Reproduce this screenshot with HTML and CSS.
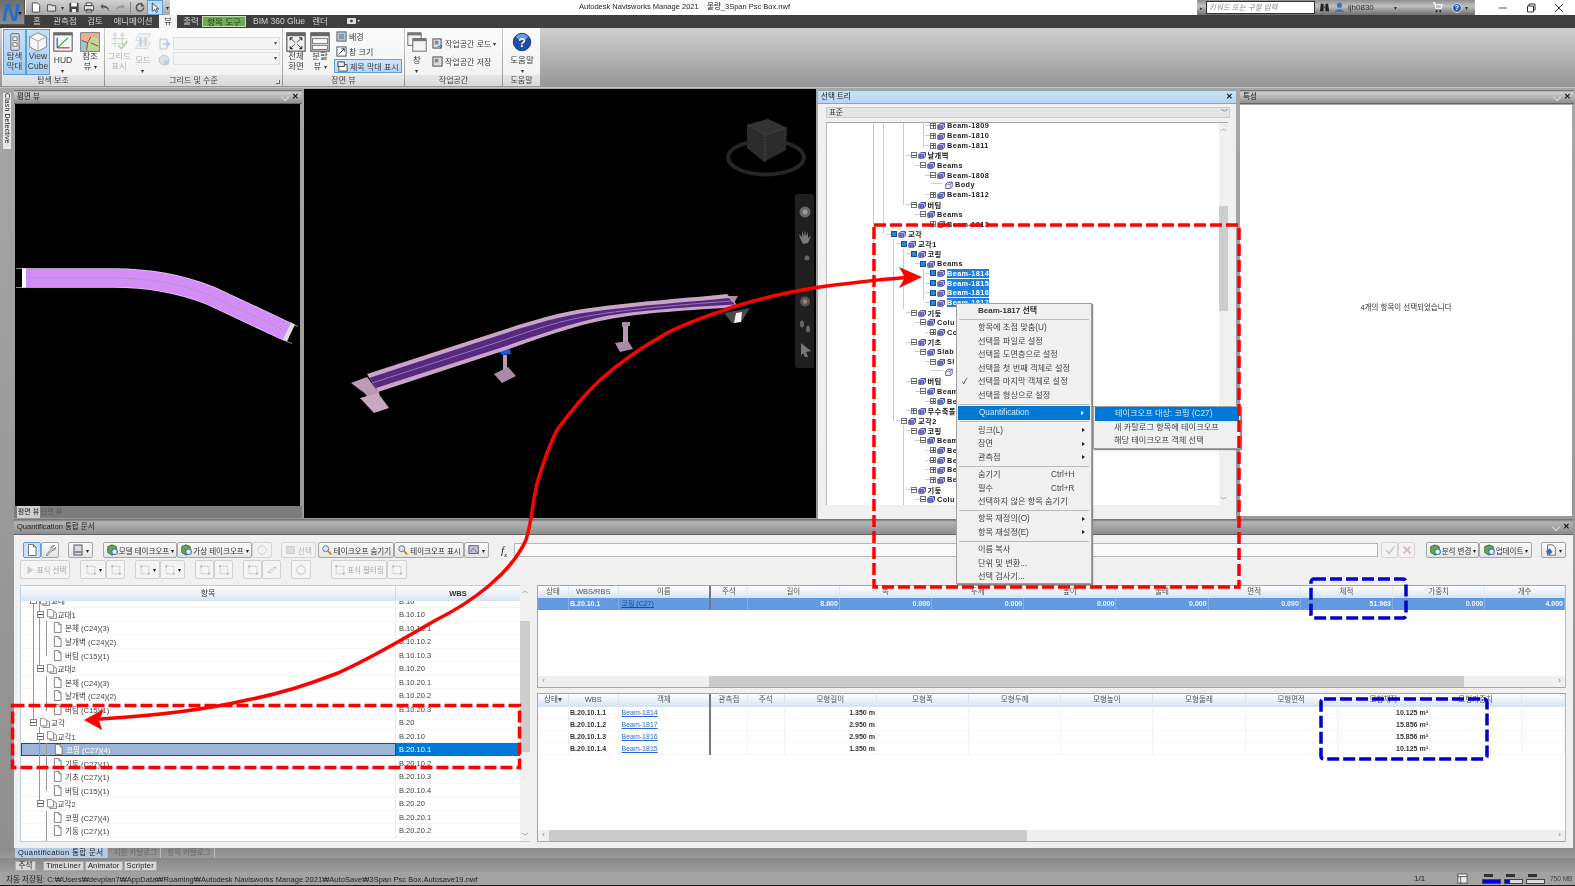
FILE: index.html
```html
<!DOCTYPE html>
<html lang="ko">
<head>
    <meta charset="UTF-8">
    <title>Autodesk Navisworks Manage 2021 - 물량_3Span Psc Box.nwf</title>
    <link rel="stylesheet" href="styles.css">
</head>
<body>
<svg class="defs" width="0" height="0">
    <symbol id="cube" viewBox="0 0 10 10"><path d="M1 4.5 3.5 2H9.500V6.500L7 9H1Z" fill="#c9caf2" stroke="#22228c"/><path d="M1 4.500H7V9M7 4.500 9.500 2M3 4.500V9M5 4.500V9M1 6.500H7" fill="none" stroke="#22228c" stroke-width=".7"/></symbol>
    <symbol id="solid" viewBox="0 0 10 10"><path d="M1 4 3.500 1.500H9V7L6.500 9.500H1Z" fill="#fff" stroke="#33339a"/><path d="M1 4H6.500V9.500M6.500 4 9 1.500" fill="none" stroke="#33339a" stroke-width=".8"/></symbol>
    <symbol id="page" viewBox="0 0 10 12"><path d="M1.500 .5H6.500L9 3V11.500H1.500Z" fill="#fff" stroke="#777"/><path d="M6.500 .5V3H9" fill="none" stroke="#777"/></symbol>
    <symbol id="pages" viewBox="0 0 14 12"><path d="M4.500 2.500H9L12.500 5V11.500H4.500Z" fill="#eee" stroke="#777"/><path d="M1.500 .5H6.500L9 3V9.500H1.500Z" fill="#fff" stroke="#777"/></symbol>
    <symbol id="takeoff" viewBox="0 0 14 14"><path d="M2 3 7 1 12 3V10L7 13 2 10Z" fill="#66a35a" stroke="#3d6b37"/><circle cx="10" cy="9" r="3.200" fill="#fff" stroke="#2f77c5" stroke-width="1.300"/></symbol>
    <symbol id="lens" viewBox="0 0 14 14"><circle cx="5.500" cy="5.500" r="3.500" fill="#d7e7f7" stroke="#667"/><path d="M8 8 12 12" stroke="#c48a1a" stroke-width="2"/></symbol>
    <symbol id="faded" viewBox="0 0 14 14"><path d="M2.500 2.500H11.500V11.500H2.500Z" fill="none" stroke="#bbb" stroke-dasharray="2 1"/><circle cx="2.500" cy="2.500" r="1.200" fill="#bbb"/><circle cx="11.500" cy="11.500" r="1.200" fill="#bbb"/></symbol>
    <symbol id="win" viewBox="0 0 24 24"><rect x="1" y="1" width="22" height="22" fill="#f2f2f2" stroke="#555" stroke-width="1.400"/><rect x="1" y="1" width="22" height="4" fill="#666"/></symbol>
</svg>

<div class="app">
    <div class="appbtn"><b>N</b><i></i></div>

    <header class="titlebar">
        <div class="qat">
            <svg class="qi" viewBox="0 0 12 12"><path d="M2 1H7.500L10 3.500V11H2Z" fill="#fff" stroke="#444"/></svg>
            <svg class="qi" viewBox="0 0 12 12"><path d="M1 3H5L6 4H10V10H1Z" fill="#ddd" stroke="#444"/></svg>
            <span class="qdrop">▾</span>
            <svg class="qi" viewBox="0 0 12 12"><path d="M1 1H11V11H1Z" fill="#444"/><path d="M3 1H9V5H3ZM4 7.500H8V11H4Z" fill="#fff"/></svg>
            <svg class="qi" viewBox="0 0 12 12"><path d="M3 1H9V4H3ZM1 4H11V9H1ZM3 8H9V11H3Z" fill="#eee" stroke="#444"/></svg>
            <svg class="qi" viewBox="0 0 12 12"><path d="M4 2 1 5 4 8V6C7 6 9 7 10 10 11 6 8 4 4 4Z" fill="#555"/></svg>
            <svg class="qi dim" viewBox="0 0 12 12"><path d="M8 2 11 5 8 8V6C5 6 3 7 2 10 1 6 4 4 8 4Z" fill="#888"/></svg>
            <span class="qsep"></span>
            <svg class="qi" viewBox="0 0 12 12"><path d="M10 6A4 4 0 1 1 8 2.500" fill="none" stroke="#555" stroke-width="1.600"/><path d="M7 0V5H11Z" fill="#555"/></svg>
            <span class="qactive"><svg class="qi" viewBox="0 0 12 12"><path d="M3 1V10L5.500 8 7.500 11.500 9 10.500 7 7.500H10Z" fill="#fff" stroke="#345"/></svg></span>
            <span class="qdrop">▾</span>
        </div>
        <div class="doc-title">Autodesk Navisworks Manage 2021 &nbsp;&nbsp; 물량_3Span Psc Box.nwf</div>
        <div class="searchgroup">
            <span class="sg-arrow">▸</span>
            <span class="sg-input">키워드 또는 구절 입력</span>
            <svg class="sg-ico" viewBox="0 0 12 12"><path d="M2 2H5V10H1ZM7 2H10L11 10H7Z" fill="#222"/><path d="M5 4H7V7H5Z" fill="#555"/></svg>
            <svg class="sg-ico" viewBox="0 0 12 12"><circle cx="6" cy="3.500" r="2.800" fill="#3c6fc9"/><path d="M1 11C1 7 11 7 11 11Z" fill="#3c6fc9"/></svg>
            <span class="sg-user">ljh0830</span>
            <span class="sg-caret">▾</span>
            <svg class="sg-ico" viewBox="0 0 12 12"><path d="M1 1H3L4 7H10L11 3H3.500" fill="none" stroke="#fff" stroke-width="1.200"/><circle cx="5" cy="10" r="1.200" fill="#223"/><circle cx="9" cy="10" r="1.200" fill="#223"/></svg>
            <span class="sg-help">?</span>
            <span class="sg-caret">▾</span>
        </div>
        <div class="winbtns">
            <svg viewBox="0 0 10 10"><path d="M1 5H9" stroke="#555"/></svg>
            <svg viewBox="0 0 10 10"><path d="M1.500 3H7.500V9H1.500ZM3 3V1H9V7H7.500" fill="none" stroke="#333"/></svg>
            <svg viewBox="0 0 10 10"><path d="M1 1 9 9M9 1 1 9" stroke="#333"/></svg>
        </div>
    </header>

    <nav class="tabbar">
        <span class="tab t1">홈</span>
        <span class="tab t2">관측점</span>
        <span class="tab t3">검토</span>
        <span class="tab t4">애니메이션</span>
        <span class="tab t5 active">뷰</span>
        <span class="tab t6">출력</span>
        <span class="tab t7 context">항목 도구</span>
        <span class="tab t8">BIM 360 Glue</span>
        <span class="tab t9">렌더</span>
        <span class="tab t10"><svg viewBox="0 0 14 8"><rect x="1" y="1" width="9" height="6" rx="1" fill="#ddd"/><circle cx="5.500" cy="4" r="1.300" fill="#333"/><path d="M11.500 3H14L12.700 5Z" fill="#ddd"/></svg></span>
    </nav>

    <section class="ribbon">
        <div class="rpanel p1">
            <div class="rbody">
                <div class="rb w23 on">
                    <svg class="big" viewBox="0 0 24 24"><rect x="7" y="2" width="10" height="20" rx="1" fill="#ddd" stroke="#555"/><rect x="9.500" y="6" width="5" height="4" fill="#fff" stroke="#666"/><rect x="9.500" y="13" width="5" height="4" fill="#fff" stroke="#666"/></svg>
                    <span>탐색<br>막대</span>
                </div>
                <div class="rb w24 on">
                    <svg class="big" viewBox="0 0 24 24"><path d="M12 1 22 6V18L12 23 2 18V6Z" fill="#f6f6f6" stroke="#777"/><path d="M2 6 12 11 22 6M12 11V23" fill="none" stroke="#999"/></svg>
                    <span>View<br>Cube</span>
                </div>
                <div class="rb w22 gap2">
                    <svg class="big" viewBox="0 0 24 24"><rect x="1" y="1" width="22" height="22" fill="#f4f4f4" stroke="#555" stroke-width="1.200"/><rect x="1" y="1" width="22" height="3" fill="#666"/><path d="M5 19 18 7" stroke="#2daa3c" stroke-width="1.400"/><path d="M5 19V7" stroke="#2c55d0" stroke-width="1.400"/><path d="M5 19H20" stroke="#d02c2c" stroke-width="1.400"/></svg>
                    <span class="push">HUD<br><i class="caret">▾</i></span>
                </div>
                <div class="rb w26 gap3">
                    <svg class="big" viewBox="0 0 24 24"><rect x="1" y="1" width="22" height="22" fill="#eee" stroke="#555" stroke-width="1.200"/><path d="M2 2H22V9L13 6 9 13 2 10Z" fill="#e9b18a"/><path d="M2 10 9 13 8 22H2Z" fill="#8fd0dc"/><path d="M13 6 22 9V22H8L9 13Z" fill="#b9dc90"/><path d="M2 10 9 13 13 6M9 13 8 22M13 13 22 17" fill="none" stroke="#b33" stroke-width="1.200"/></svg>
                    <span>참조<br>뷰 <i class="caret">▾</i></span>
                </div>
            </div>
            <div class="rlabel">탐색 보조</div>
        </div>
        <div class="rpanel p2">
            <div class="rbody off">
                <div class="rb w24 gap1">
                    <svg class="big" viewBox="0 0 24 24"><path d="M7 3V18M16 3V18M3 8H21M3 14H21" stroke="#bbb" fill="none"/><circle cx="7" cy="3" r="2" fill="none" stroke="#bbb"/><circle cx="16" cy="3" r="2" fill="none" stroke="#bbb"/><path d="M11 16 15 20 22 11" stroke="#a6cf9c" fill="none" stroke-width="2.200"/></svg>
                    <span>그리드<br>표시</span>
                </div>
                <div class="rb w24">
                    <svg class="big" viewBox="0 0 24 24"><path d="M7 2H21L17 10H3ZM7 12H21L17 20H3Z" fill="#eee" stroke="#ccc"/><path d="M9 6V17M15 17V6" stroke="#a8c4e0" stroke-width="2"/></svg>
                    <span class="push">모드<br><i class="caret">▾</i></span>
                </div>
                <div class="rsmallic">
                    <svg viewBox="0 0 12 12"><path d="M2 1H9V11H2Z" fill="#f3f3f3" stroke="#bbb"/><path d="M5 6H11M9 3.500 11.500 6 9 8.500" stroke="#9cc0e4" fill="none" stroke-width="1.300"/></svg>
                    <svg viewBox="0 0 12 12"><circle cx="6" cy="6" r="5" fill="#ddd" stroke="#bbb"/><circle cx="8.500" cy="8.500" r="2.500" fill="#a8c4e0"/></svg>
                </div>
                <div class="rcombos">
                    <div class="combo"><i>▾</i></div>
                    <div class="combo"><i>▾</i></div>
                </div>
            </div>
            <div class="rlabel">그리드 및 수준<i class="launcher"></i></div>
        </div>
        <div class="rpanel p3">
            <div class="rbody">
                <div class="rb w24">
                    <svg class="big" viewBox="0 0 24 24"><use href="#win"/><path d="M6 8 11 12.500M18 8 13 12.500M6 19 11 14.500M18 19 13 14.500" stroke="#333"/><path d="M5 7H8M5 7V10M19 7H16M19 7V10M5 20H8M5 20V17M19 20H16M19 20V17" stroke="#222" stroke-width="1.400"/></svg>
                    <span>전체<br>화면</span>
                </div>
                <div class="rb w24">
                    <svg class="big" viewBox="0 0 24 24"><use href="#win"/><rect x="3" y="8" width="18" height="6" fill="#f9f9f9" stroke="#666"/><rect x="3" y="16" width="18" height="5" fill="#f9f9f9" stroke="#666"/></svg>
                    <span>분할<br>뷰 <i class="caret">▾</i></span>
                </div>
                <div class="rrows r3">
                    <div class="rrow"><svg viewBox="0 0 12 12"><rect x="1" y="1" width="10" height="10" fill="#bcd0e4" stroke="#555"/><rect x="3" y="3" width="6" height="6" fill="#8899aa"/></svg>배경</div>
                    <div class="rrow"><svg viewBox="0 0 12 12"><rect x="1" y="1" width="10" height="10" fill="#fff" stroke="#444"/><path d="M3 9 9 3M6 3H9V6" fill="none" stroke="#333"/></svg>창 크기</div>
                    <div class="rrow on"><svg viewBox="0 0 12 12"><rect x="2" y="4" width="9" height="7" fill="#fff" stroke="#444"/><rect x="1" y="1" width="7" height="5" fill="#eee" stroke="#444"/></svg>제목 막대 표시</div>
                </div>
            </div>
            <div class="rlabel">장면 뷰</div>
        </div>
        <div class="rpanel p4">
            <div class="rbody">
                <div class="rb w22">
                    <svg class="big" viewBox="0 0 24 24"><rect x="1" y="1" width="16" height="15" fill="#f4f4f4" stroke="#555"/><rect x="1" y="1" width="16" height="3" fill="#777"/><rect x="7" y="8" width="16" height="15" fill="#f4f4f4" stroke="#555"/><rect x="7" y="8" width="16" height="3" fill="#777"/></svg>
                    <span class="push">창<br><i class="caret">▾</i></span>
                </div>
                <div class="rrows r4">
                    <div class="rrow"><svg viewBox="0 0 12 12"><rect x="1" y="1" width="9" height="10" fill="#ddd" stroke="#444"/><path d="M3 3H7V7H3Z" fill="#888"/><path d="M6 9H11M9 7 11 9 9 11" stroke="#2b6fc8" fill="none"/></svg>작업공간 로드 <i class="caret">▾</i></div>
                    <div class="rrow"><svg viewBox="0 0 12 12"><rect x="1" y="1" width="10" height="10" fill="#ddd" stroke="#444"/><path d="M3 3H7V7H3Z" fill="#888"/></svg>작업공간 저장</div>
                </div>
            </div>
            <div class="rlabel">작업공간</div>
        </div>
        <div class="rpanel p5">
            <div class="rbody">
                <div class="rb w36">
                    <svg class="big" viewBox="0 0 24 24"><circle cx="12" cy="12" r="10.500" fill="#1c4fa8" stroke="#10326e"/><ellipse cx="12" cy="6" rx="7" ry="3.500" fill="#6d9be0"/><text x="12" y="18" text-anchor="middle" class="helpq">?</text></svg>
                    <span class="push">도움말<br><i class="caret">▾</i></span>
                </div>
            </div>
            <div class="rlabel">도움말</div>
        </div>
    </section>

    <main class="workspace">
        <div class="sidestrip"><span>Clash Detective</span></div>

        <section class="panel plan">
            <div class="ptitle">평면 뷰<span class="pbtns"><i class="pin"></i><i class="x">✕</i></span></div>
            <div class="planview">
                <svg viewBox="15 104 285 401">
                    <path d="M16 268H22M16 287H22M291 323 298 326M284 340 292 343" stroke="#888"/>
                    <path class="deck" d="M22 277.500H113C150 277.500 180 283 210 295L288 331.500"/>
                    <path class="deckin" d="M22 277.500H113C150 277.500 180 283 210 295L288 331.500"/>
                    <path class="deckline" d="M25 277.500H113C150 277.500 180 283 210 295L286 330.500"/>
                    <path d="M22 268H26V287H22Z" fill="#fff"/>
                    <path d="M291 322 295 324 287 341 283 339Z" fill="#ddd"/>
                </svg>
            </div>
            <div class="viewtabs"><span class="vt on">평면 뷰</span><span class="vt">단면 뷰</span></div>
        </section>

        <section class="view3d">
            <svg viewBox="304 89 512 429">
                <ellipse cx="766" cy="157.500" rx="38" ry="17" fill="none" stroke="#262626" stroke-width="4"/>
                <path d="M747 125 768 119 787 128 786 150 764 162 747 148Z" fill="#2c2c2c"/>
                <path d="M747 125 768 119 787 128 765 135Z" fill="#333"/>
                <path d="M765 135V162M748 125 765 135 787 128" stroke="#454545" stroke-dasharray="2 1" fill="none"/>

                <path d="M351 383 367 377 379 393 367 395Z" fill="#bd9db6"/>
                <path d="M364 392 379 391 380 400 370 401Z" fill="#b597b0"/>
                <path d="M360 398 378 393 389 408 374 413Z" fill="#c9a8c4"/>
                <path d="M503 355H507V374H503Z" fill="#b79ab2"/>
                <path d="M494 374 508 367 516 376 502 383Z" fill="#a98ba6"/>
                <path d="M499 351 510 349 511 354 502 355Z" fill="#2354d8"/>
                <path d="M623 325H628V342H623Z" fill="#b79ab2"/>
                <path d="M622 322 630 322 630 326 622 327Z" fill="#a98ba6"/>
                <path d="M615 343 628 341 633 349 620 352Z" fill="#a98ba6"/>
                <path d="M728 296 738 296 734 303Z" fill="#a98ba6"/>
                <path d="M724 313 750 308 742 321 732 323Z" fill="#4a4a4a"/>
                <path d="M736 313 742 312 741 322 734 323Z" fill="#f4f0f4"/>

                <path d="M367 374 500 331C530 321 560 312 590 308 640 301 690 298 727 294L739 307C690 310 640 313 610 319 570 326 530 342 500 352L378 392Z" fill="#c8a4c6"/>
                <path d="M369 378 500 335C530 325 560 316 590 312 640 305 690 302 729 298L735 304.500C690 307 640 310 606 316 570 323 530 338 500 348L376 388Z" fill="#55297f"/>
                <path d="M372 383 500 341.500C530 331 560 320 600 314 640 308 690 304 732 301" fill="none" stroke="#b495c4" stroke-width=".7"/>

                <rect x="795" y="194" width="19" height="174" rx="2" fill="#1f1f1f"/>
                <circle cx="805" cy="212" r="5.500" fill="#666"/><circle cx="805" cy="212" r="2.500" fill="#999"/>
                <path d="M800 238 799 234 802 237 802 231 804 236 805 230 806 236 808 232 808 238 811 236 808 243 803 244Z" fill="#777"/>
                <circle cx="807" cy="258" r="2.500" fill="#666"/>
                <circle cx="805" cy="301.500" r="5" fill="#555"/><circle cx="805" cy="301.500" r="2.200" fill="#8a8a6a"/>
                <ellipse cx="802" cy="324" rx="2" ry="3.500" fill="#666"/><ellipse cx="808" cy="329" rx="2" ry="3.500" fill="#666"/>
                <path d="M801 343 811 351 806 352 808 357 805 357 803 353 801 356Z" fill="#777"/>
            </svg>
        </section>

        <section class="panel seltree">
            <div class="ptitle focus">선택 트리<span class="pbtns"><i class="x">✕</i></span></div>
            <div class="treewrap">
                <div class="treecombo">표준<i>﹀</i></div>
                <div class="treebox">
                    <i class="g g1"></i><i class="g g2"></i><i class="g g3"></i><i class="g g4"></i><i class="g g5"></i><i class="g g6"></i><i class="g g7"></i><i class="g g8"></i>
                    <div class="treerows">
                        <div class="tr l4"><i class="xb plus"></i><svg class="ic"><use href="#cube"/></svg>Beam-1809</div>
                        <div class="tr l4"><i class="xb plus"></i><svg class="ic"><use href="#cube"/></svg>Beam-1810</div>
                        <div class="tr l4"><i class="xb plus"></i><svg class="ic"><use href="#cube"/></svg>Beam-1811</div>
                        <div class="tr l2"><i class="xb"></i><svg class="ic"><use href="#cube"/></svg>날개벽</div>
                        <div class="tr l3"><i class="xb"></i><svg class="ic"><use href="#cube"/></svg>Beams</div>
                        <div class="tr l4"><i class="xb"></i><svg class="ic"><use href="#cube"/></svg>Beam-1808</div>
                        <div class="tr l5"><i class="xb none"></i><svg class="ic"><use href="#solid"/></svg>Body</div>
                        <div class="tr l4"><i class="xb plus"></i><svg class="ic"><use href="#cube"/></svg>Beam-1812</div>
                        <div class="tr l2"><i class="xb"></i><svg class="ic"><use href="#cube"/></svg>버팀</div>
                        <div class="tr l3"><i class="xb"></i><svg class="ic"><use href="#cube"/></svg>Beams</div>
                        <div class="tr l4"><i class="xb plus"></i><svg class="ic"><use href="#cube"/></svg>Beam-1813</div>
                        <div class="tr l0 sel"><i class="xb"></i><svg class="ic"><use href="#cube"/></svg>교각</div>
                        <div class="tr l1 sel"><i class="xb"></i><svg class="ic"><use href="#cube"/></svg>교각1</div>
                        <div class="tr l2 sel"><i class="xb"></i><svg class="ic"><use href="#cube"/></svg>코핑</div>
                        <div class="tr l3 sel"><i class="xb"></i><svg class="ic"><use href="#cube"/></svg>Beams</div>
                        <div class="tr l4 sel hl"><i class="xb"></i><svg class="ic"><use href="#cube"/></svg><span>Beam-1814</span></div>
                        <div class="tr l4 sel hl"><i class="xb"></i><svg class="ic"><use href="#cube"/></svg><span>Beam-1815</span></div>
                        <div class="tr l4 sel hl"><i class="xb"></i><svg class="ic"><use href="#cube"/></svg><span>Beam-1816</span></div>
                        <div class="tr l4 sel hl"><i class="xb"></i><svg class="ic"><use href="#cube"/></svg><span>Beam-1817</span></div>
                        <div class="tr l2"><i class="xb"></i><svg class="ic"><use href="#cube"/></svg>기둥</div>
                        <div class="tr l3"><i class="xb"></i><svg class="ic"><use href="#cube"/></svg>Colu</div>
                        <div class="tr l4"><i class="xb plus"></i><svg class="ic"><use href="#cube"/></svg>Co</div>
                        <div class="tr l2"><i class="xb"></i><svg class="ic"><use href="#cube"/></svg>기초</div>
                        <div class="tr l3"><i class="xb"></i><svg class="ic"><use href="#cube"/></svg>Slab</div>
                        <div class="tr l4"><i class="xb"></i><svg class="ic"><use href="#cube"/></svg>Sl</div>
                        <div class="tr l5"><i class="xb none"></i><svg class="ic"><use href="#solid"/></svg></div>
                        <div class="tr l2"><i class="xb"></i><svg class="ic"><use href="#cube"/></svg>버팀</div>
                        <div class="tr l3"><i class="xb"></i><svg class="ic"><use href="#cube"/></svg>Beam</div>
                        <div class="tr l4"><i class="xb plus"></i><svg class="ic"><use href="#cube"/></svg>Be</div>
                        <div class="tr l2"><i class="xb plus"></i><svg class="ic"><use href="#cube"/></svg>무수축몰</div>
                        <div class="tr l1"><i class="xb"></i><svg class="ic"><use href="#cube"/></svg>교각2</div>
                        <div class="tr l2"><i class="xb"></i><svg class="ic"><use href="#cube"/></svg>코핑</div>
                        <div class="tr l3"><i class="xb"></i><svg class="ic"><use href="#cube"/></svg>Beam</div>
                        <div class="tr l4"><i class="xb plus"></i><svg class="ic"><use href="#cube"/></svg>Be</div>
                        <div class="tr l4"><i class="xb plus"></i><svg class="ic"><use href="#cube"/></svg>Be</div>
                        <div class="tr l4"><i class="xb plus"></i><svg class="ic"><use href="#cube"/></svg>Be</div>
                        <div class="tr l4"><i class="xb plus"></i><svg class="ic"><use href="#cube"/></svg>Be</div>
                        <div class="tr l2"><i class="xb"></i><svg class="ic"><use href="#cube"/></svg>기둥</div>
                        <div class="tr l3"><i class="xb"></i><svg class="ic"><use href="#cube"/></svg>Colu</div>
                    </div>
                    <div class="vscroll tscroll"><b>︿</b><i class="thumb"></i><b class="end">﹀</b></div>
                </div>
            </div>
        </section>

        <section class="panel props">
            <div class="ptitle">특성<span class="pbtns"><i class="pin"></i><i class="x">✕</i></span></div>
            <div class="propbody">4개의 항목이 선택되었습니다</div>
        </section>
    </main>

    <section class="quant">
        <div class="ptitle qtitle">Quantification 통합 문서<span class="pbtns"><i class="pin"></i><i class="x">✕</i></span></div>
        <div class="qbody">
            <div class="toolbar tb1">
                <div class="bgroup m0">
                    <span class="tbtn icon on"><svg viewBox="0 0 12 12"><use href="#page"/></svg></span>
                    <span class="tbtn icon"><svg viewBox="0 0 12 12"><path d="M2 11 7 5.500C6.500 3 8 1 10.500 1.500L8.500 3.500 9 4.500 10 5 12 3C12 5.500 10 7 8 6.500L3 12Z" fill="#ddd" stroke="#666" stroke-width=".7"/></svg></span>
                </div>
                <div class="bgroup m9"><span class="tbtn icon wide"><svg viewBox="0 0 12 12"><rect x="2" y="1" width="8" height="10" fill="#ddd" stroke="#556"/><rect x="2" y="7" width="8" height="2" fill="#889"/></svg><i>▾</i></span></div>
                <div class="bgroup m10">
                    <span class="tbtn b74"><svg viewBox="0 0 14 14"><use href="#takeoff"/></svg>모델 테이크오프<i>▾</i></span>
                    <span class="tbtn b75"><svg viewBox="0 0 14 14"><use href="#takeoff"/></svg>가상 테이크오프<i>▾</i></span>
                    <span class="tbtn b20 off"><svg viewBox="0 0 14 14"><circle cx="7" cy="7" r="5" fill="none" stroke="#ccc"/></svg></span>
                </div>
                <div class="bgroup m9"><span class="tbtn b35 off"><svg viewBox="0 0 14 14"><rect x="2" y="3" width="9" height="8" fill="#ddd" stroke="#ccc"/></svg>선택</span></div>
                <div class="bgroup m2">
                    <span class="tbtn b76"><svg viewBox="0 0 14 14"><use href="#lens"/></svg>테이크오프 숨기기</span>
                    <span class="tbtn b70"><svg viewBox="0 0 14 14"><use href="#lens"/></svg>테이크오프 표시</span>
                    <span class="tbtn b25"><svg viewBox="0 0 14 14"><rect x="1" y="2" width="11" height="9" fill="#b8c4d8" stroke="#556"/><path d="M3 9 6 5 9 8 12 12" stroke="#c44" fill="none"/></svg><i>▾</i></span>
                </div>
                <span class="fx">f<sub>x</sub></span>
                <div class="formula"></div>
                <div class="bgroup m3">
                    <span class="tbtn b17 off ctr"><svg viewBox="0 0 14 14"><path d="M2 7 6 11 12 3" fill="none" stroke="#ccc" stroke-width="2"/></svg></span>
                    <span class="tbtn b17 off ctr"><svg viewBox="0 0 14 14"><path d="M3 3 11 11M11 3 3 11" fill="none" stroke="#dbb" stroke-width="2"/></svg></span>
                </div>
                <div class="bgroup m11">
                    <span class="tbtn b53"><svg viewBox="0 0 14 14"><use href="#takeoff"/></svg>분석 변경<i>▾</i></span>
                    <span class="tbtn b53"><svg viewBox="0 0 14 14"><use href="#takeoff"/></svg>업데이트<i>▾</i></span>
                </div>
                <div class="bgroup m9"><span class="tbtn b25"><svg viewBox="0 0 14 14"><path d="M3 1H9L12 4V13H3Z" fill="#fff" stroke="#556"/><path d="M1 9 5 5 9 9 5 13Z" fill="#2b6fc8"/></svg><i>▾</i></span></div>
            </div>
            <div class="toolbar tb2 dimmed">
                <div class="bgroup m0"><span class="tbtn b50"><svg viewBox="0 0 14 14"><path d="M4 2V12L11 7Z" fill="#ccc"/></svg>표식 선택</span></div>
                <div class="bgroup m10"><span class="tbtn b26"><svg viewBox="0 0 14 14"><use href="#faded"/></svg><i>▾</i></span><span class="tbtn b19"><svg viewBox="0 0 14 14"><use href="#faded"/></svg></span></div>
                <div class="bgroup m10"><span class="tbtn b25"><svg viewBox="0 0 14 14"><use href="#faded"/></svg><i>▾</i></span><span class="tbtn b25"><svg viewBox="0 0 14 14"><use href="#faded"/></svg><i>▾</i></span></div>
                <div class="bgroup m10"><span class="tbtn b19"><svg viewBox="0 0 14 14"><use href="#faded"/></svg></span><span class="tbtn b19"><svg viewBox="0 0 14 14"><use href="#faded"/></svg></span></div>
                <div class="bgroup m10"><span class="tbtn b19"><svg viewBox="0 0 14 14"><use href="#faded"/></svg></span><span class="tbtn b19"><svg viewBox="0 0 14 14"><path d="M2 10 9 4H12L6 10Z" fill="none" stroke="#bbb"/></svg></span></div>
                <div class="bgroup m10"><span class="tbtn b20"><svg viewBox="0 0 14 14"><circle cx="7" cy="7" r="5" fill="none" stroke="#bbb"/></svg></span></div>
                <div class="bgroup m20"><span class="tbtn b56"><svg viewBox="0 0 14 14"><use href="#faded"/></svg>표식 필터링</span><span class="tbtn b20"><svg viewBox="0 0 14 14"><use href="#faded"/></svg></span></div>
            </div>

            <div class="qgrid">
                <div class="qtree">
                    <div class="qhead"><span class="qh1">항목</span><span class="qh2">WBS</span></div>
                    <div class="qlist">
                        <i class="qg q1"></i><i class="qg q2"></i><i class="qg q3"></i><i class="qg q4"></i><i class="qg q5"></i><i class="qg q6"></i><i class="qg q7"></i>
                        <div class="qrows">
                            <div class="qr"><div class="qn d0"><i class="xb"></i><svg class="qi2"><use href="#pages"/></svg>교대</div><div class="qw">B.10</div></div>
                            <div class="qr"><div class="qn d1"><i class="xb"></i><svg class="qi2"><use href="#pages"/></svg>교대1</div><div class="qw">B.10.10</div></div>
                            <div class="qr"><div class="qn d2"><svg class="qi3"><use href="#page"/></svg>본체 (C24)(3)</div><div class="qw">B.10.10.1</div></div>
                            <div class="qr"><div class="qn d2"><svg class="qi3"><use href="#page"/></svg>날개벽 (C24)(2)</div><div class="qw">B.10.10.2</div></div>
                            <div class="qr"><div class="qn d2"><svg class="qi3"><use href="#page"/></svg>버팀 (C15)(1)</div><div class="qw">B.10.10.3</div></div>
                            <div class="qr"><div class="qn d1"><i class="xb"></i><svg class="qi2"><use href="#pages"/></svg>교대2</div><div class="qw">B.10.20</div></div>
                            <div class="qr"><div class="qn d2"><svg class="qi3"><use href="#page"/></svg>본체 (C24)(3)</div><div class="qw">B.10.20.1</div></div>
                            <div class="qr"><div class="qn d2"><svg class="qi3"><use href="#page"/></svg>날개벽 (C24)(2)</div><div class="qw">B.10.20.2</div></div>
                            <div class="qr"><div class="qn d2"><svg class="qi3"><use href="#page"/></svg>버팀 (C15)(1)</div><div class="qw">B.10.20.3</div></div>
                            <div class="qr"><div class="qn d0"><i class="xb"></i><svg class="qi2"><use href="#pages"/></svg>교각</div><div class="qw">B.20</div></div>
                            <div class="qr"><div class="qn d1"><i class="xb"></i><svg class="qi2"><use href="#pages"/></svg>교각1</div><div class="qw">B.20.10</div></div>
                            <div class="qr picked"><div class="qn d2"><svg class="qi3"><use href="#page"/></svg>코핑 (C27)(4)</div><div class="qw">B.20.10.1</div></div>
                            <div class="qr"><div class="qn d2"><svg class="qi3"><use href="#page"/></svg>기둥 (C27)(1)</div><div class="qw">B.20.10.2</div></div>
                            <div class="qr"><div class="qn d2"><svg class="qi3"><use href="#page"/></svg>기초 (C27)(1)</div><div class="qw">B.20.10.3</div></div>
                            <div class="qr"><div class="qn d2"><svg class="qi3"><use href="#page"/></svg>버팀 (C15)(1)</div><div class="qw">B.20.10.4</div></div>
                            <div class="qr"><div class="qn d1"><i class="xb"></i><svg class="qi2"><use href="#pages"/></svg>교각2</div><div class="qw">B.20.20</div></div>
                            <div class="qr"><div class="qn d2"><svg class="qi3"><use href="#page"/></svg>코핑 (C27)(4)</div><div class="qw">B.20.20.1</div></div>
                            <div class="qr"><div class="qn d2"><svg class="qi3"><use href="#page"/></svg>기둥 (C27)(1)</div><div class="qw">B.20.20.2</div></div>
                        </div>
                    </div>
                    <div class="vscroll qscroll"><b>︿</b><i class="thumb"></i><b class="end">﹀</b></div>
                </div>

                <div class="qright">
                    <div class="grid upper">
                        <table>
                            <colgroup><col class="c30"><col class="c50"><col class="c92 split"><col class="c37"><col class="c92"><col class="c92"><col class="c92"><col class="c92"><col class="c92"><col class="c92"><col class="c92"><col class="c92"><col></colgroup>
                            <thead><tr><th>상태</th><th>WBS/RBS</th><th class="div">이름</th><th>주석</th><th>길이</th><th>폭</th><th>두께</th><th>높이</th><th>둘레</th><th>면적</th><th>체적</th><th>가중치</th><th>개수</th></tr></thead>
                            <tbody><tr class="rowsel"><td></td><td>B.20.10.1</td><td class="div"><a>코핑 (C27)</a></td><td></td><td class="n">8.600</td><td class="n">0.000</td><td class="n">0.000</td><td class="n">0.000</td><td class="n">0.000</td><td class="n">0.000</td><td class="n">51.963</td><td class="n">0.000</td><td class="n">4.000</td></tr></tbody>
                        </table>
                        <div class="hscroll h1"><b>‹</b><i class="hthumb"></i><b class="end">›</b></div>
                    </div>
                    <div class="grid lower">
                        <table>
                            <colgroup><col class="c30"><col class="c50"><col class="c92"><col class="c37"><col class="c37"><col class="c92"><col class="c92"><col class="c92"><col class="c92"><col class="c92"><col class="c92"><col class="c92"><col class="c92"><col></colgroup>
                            <thead><tr><th>상태▾</th><th>WBS</th><th class="div">객체</th><th>관측점</th><th>주석</th><th>모형길이</th><th>모형폭</th><th>모형두께</th><th>모형높이</th><th>모형둘레</th><th>모형면적</th><th>모형체적</th><th>모형가중치</th><th></th></tr></thead>
                            <tbody>
                                <tr><td></td><td>B.20.10.1.1</td><td class="div"><a>Beam-1814</a></td><td></td><td></td><td class="n">1.350 m</td><td></td><td></td><td></td><td></td><td></td><td class="n">10.125 m³</td><td></td><td></td></tr>
                                <tr><td></td><td>B.20.10.1.2</td><td class="div"><a>Beam-1817</a></td><td></td><td></td><td class="n">2.950 m</td><td></td><td></td><td></td><td></td><td></td><td class="n">15.856 m³</td><td></td><td></td></tr>
                                <tr><td></td><td>B.20.10.1.3</td><td class="div"><a>Beam-1816</a></td><td></td><td></td><td class="n">2.950 m</td><td></td><td></td><td></td><td></td><td></td><td class="n">15.856 m³</td><td></td><td></td></tr>
                                <tr><td></td><td>B.20.10.1.4</td><td class="div"><a>Beam-1815</a></td><td></td><td></td><td class="n">1.350 m</td><td></td><td></td><td></td><td></td><td></td><td class="n">10.125 m³</td><td></td><td></td></tr>
                            </tbody>
                        </table>
                        <div class="hscroll h2"><b>‹</b><i class="hthumb"></i><b class="end">›</b></div>
                    </div>
                </div>
            </div>
        </div>
    </section>

    <div class="doctabs"><span class="dt on">Quantification 통합 문서</span><span class="dt">지원 카탈로그</span><span class="dt">항목 카탈로그</span></div>
    <div class="dockbar"><span class="db first">주석</span><span class="db">TimeLiner</span><span class="db">Animator</span><span class="db">Scripter</span></div>
    <footer class="statusbar">
        <span class="autosave">자동 저장됨: C:₩Users₩devplan7₩AppData₩Roaming₩Autodesk Navisworks Manage 2021₩AutoSave₩3Span Psc Box.Autosave19.nwf</span>
        <span class="sheet">1/1</span>
        <svg class="sheetic" viewBox="0 0 12 12"><rect x="1" y="1" width="10" height="10" fill="#eee" stroke="#555"/><path d="M1 4H11M4 4V11" stroke="#555"/></svg>
        <span class="meter"><i class="m100"></i></span>
        <span class="meter"><i class="m30"></i></span>
        <span class="meter"></span>
        <span class="mem">750 MB</span>
    </footer>

    <div class="ctxmenu">
        <div class="mi head">Beam-1817 선택</div>
        <div class="msep"></div>
        <div class="mi">항목에 초점 맞춤(U)</div>
        <div class="mi">선택을 파일로 설정</div>
        <div class="mi">선택을 도면층으로 설정</div>
        <div class="mi">선택을 첫 번째 객체로 설정</div>
        <div class="mi check">선택을 마지막 객체로 설정</div>
        <div class="mi">선택을 형상으로 설정</div>
        <div class="msep"></div>
        <div class="mi hot sub">Quantification</div>
        <div class="msep"></div>
        <div class="mi sub">링크(L)</div>
        <div class="mi sub">장면</div>
        <div class="mi sub">관측점</div>
        <div class="msep"></div>
        <div class="mi">숨기기<kbd>Ctrl+H</kbd></div>
        <div class="mi">필수<kbd>Ctrl+R</kbd></div>
        <div class="mi">선택하지 않은 항목 숨기기</div>
        <div class="msep"></div>
        <div class="mi sub">항목 재정의(O)</div>
        <div class="mi sub">항목 재설정(E)</div>
        <div class="msep"></div>
        <div class="mi">이름 복사</div>
        <div class="mi">단위 및 변환...</div>
        <div class="mi">선택 검사기...</div>
    </div>
    <div class="ctxmenu submenu">
        <div class="mi hot">테이크오프 대상: 코핑 (C27)</div>
        <div class="mi">새 카탈로그 항목에 테이크오프</div>
        <div class="mi">해당 테이크오프 객체 선택</div>
    </div>

    <svg class="marks" viewBox="0 0 1575 886">
        <rect class="dash-red" x="874" y="225" width="365" height="362"/>
        <rect class="dash-red" x="12.500" y="705.500" width="507" height="62"/>
        <rect class="dash-blue" x="1311" y="579" width="95" height="39" rx="3"/>
        <rect class="dash-blue" x="1321" y="699" width="166" height="60" rx="3"/>
        <path class="curve" d="M908 277.500C880 279 850 283 820 287 788 292 758 299 733 307 710 315 688 322 667 333 642 347 620 362 600 380 584 395 570 412 557 430 549 445 543 464 538 480 532 500 533 518 526 540 510 575 470 603 436 620 405 638 372 658 338 673 310 684 280 694 247 700 200 711 150 716 100 719"/>
        <path class="head" d="M922 277 899 267 905 277.500 899 288Z"/>
        <path class="head" d="M84 720 104 709 99 720 102 730Z"/>
    </svg>
</div>
</body>
</html>
```
FILE: styles.css
```css
* {
    margin: 0;
    padding: 0;
    box-sizing: border-box;
}

body {
    font-family: "Liberation Sans", "Noto Sans CJK KR", sans-serif;
    font-size: 8px;
    color: #3a3a3a;
    background: #000;
}

i { font-style: normal; }

.defs { position: absolute; }

.app {
    position: relative;
    width: 1575px;
    height: 886px;
    overflow: hidden;
    display: flex;
    flex-direction: column;
    background: linear-gradient(#a9a9a9, #8e8e8e);
    filter: blur(0.3px);
}

/* title bar */
.appbtn {
    position: absolute;
    left: 0;
    top: 0;
    width: 25px;
    height: 25px;
    background: linear-gradient(#6e6e6e, #8c8c8c);
    border-right: 1px solid #555;
    border-bottom: 1px solid #555;
    z-index: 3;
}
.appbtn b {
    display: block;
    font-size: 24px;
    line-height: 25px;
    padding-left: 2px;
    color: #1f6fd0;
    font-style: italic;
}
.appbtn i {
    position: absolute;
    right: 2px;
    top: 12px;
    border: 2px solid transparent;
    border-top: 3px solid #222;
}

.titlebar {
    height: 15px;
    background: #fff;
    display: flex;
    align-items: stretch;
    position: relative;
}
.qat {
    width: 144px;
    margin-left: 26px;
    display: flex;
    align-items: center;
    padding-left: 4px;
    background: linear-gradient(#d2d2d2, #a8a8a8);
    gap: 3.5px;
}
.qi { width: 12px; height: 11px; flex: none; }
.qi.dim { opacity: .7; }
.qdrop { font-size: 6px; color: #333; }
.qsep { width: 1px; height: 12px; background: #888; }
.qactive {
    display: flex;
    background: #bcdcf8;
    border: 1px solid #5f9fdc;
    padding: 1px;
    height: 15px;
    align-items: center;
    margin-left: -3px;
}
.doc-title {
    margin-left: 409px;
    width: 620px;
    line-height: 14px;
    font-size: 7.500px;
    color: #222;
}
.searchgroup {
    position: absolute;
    left: 1197px;
    top: 0;
    width: 278px;
    height: 15px;
    display: flex;
    align-items: center;
    background: linear-gradient(#8d8d8d, #c0c0c0 40%, #6e6e6e);
}
.sg-arrow { font-size: 5px; padding: 0 3px; color: #333; }
.sg-input {
    width: 109px;
    height: 13px;
    background: #fff;
    border: 1px solid #333;
    font-style: italic;
    font-size: 7.500px;
    color: #888;
    padding-left: 2px;
    line-height: 11px;
}
.sg-ico { width: 11px; height: 11px; margin-left: 4px; flex: none; }
.sg-user { font-size: 8px; margin-left: 3px; width: 46px; color: #333; }
.sg-caret { font-size: 6px; color: #333; width: 34px; }
.sg-help {
    width: 10px;
    height: 10px;
    border-radius: 50%;
    background: #2f62b8;
    color: #fff;
    border: 1px solid #ddd;
    font: bold 7px/8px "Liberation Sans", sans-serif;
    text-align: center;
    margin-left: 9px;
    margin-right: 3px;
}
.searchgroup .sg-caret:last-child { width: 8px; }
.winbtns {
    position: absolute;
    left: 1498px;
    top: 0;
    display: flex;
    gap: 18px;
    padding-top: 3px;
}
.winbtns svg { width: 10px; height: 10px; }

/* ribbon */
.tabbar {
    height: 13px;
    background: #3f3f3f;
    display: flex;
    padding-left: 30px;
    align-items: stretch;
}
.tab {
    color: #cfcfcf;
    font-size: 8.500px;
    line-height: 13px;
    text-align: center;
    flex: none;
}
.tab svg { width: 14px; height: 8px; margin-top: 2px; }
.tab.active { background: #f3f3f3; color: #333; }
.tab.context {
    background: #6cab59;
    border: 1px solid #bfe0ad;
    color: #1e3a18;
    line-height: 10px;
    margin: 1px 0;
}
.t1 { width: 14px; }
.t2 { width: 30px; margin-left: 6px; }
.t3 { width: 20px; margin-left: 5px; }
.t4 { width: 42px; margin-left: 7px; }
.t5 { width: 18px; margin-left: 5px; }
.t6 { width: 22px; margin-left: 3px; }
.t7 { width: 44px; margin-left: 3px; }
.t8 { width: 52px; margin-left: 7px; }
.t9 { width: 18px; margin-left: 6px; }
.t10 { width: 18px; margin-left: 15px; }

.ribbon {
    height: 60px;
    display: flex;
    padding: 0 0 1px 2px;
    gap: 1px;
    background: linear-gradient(#cfcfcf, #959595);
    border-bottom: 1px solid #c4c4c4;
}
.rpanel {
    display: flex;
    flex-direction: column;
    background: linear-gradient(#fbfbfb, #f1f1f1);
}
.p1 { width: 102px; }
.p2 { width: 177px; }
.p3 { width: 121px; }
.p4 { width: 97px; }
.p5 { width: 37px; }
.rbody { flex: 1; min-height: 0; display: flex; padding: 1px 1px 0; }
.rlabel {
    position: relative;
    height: 11px;
    flex: none;
    background: linear-gradient(#e6e6e6, #d8d8d8);
    font-size: 8px;
    line-height: 11px;
    text-align: center;
    color: #444;
}
.launcher {
    position: absolute;
    right: 2px;
    bottom: 2px;
    width: 4px;
    height: 4px;
    border-right: 1px solid #666;
    border-bottom: 1px solid #666;
}
.rb {
    display: flex;
    flex-direction: column;
    align-items: center;
    flex: none;
    padding-top: 3px;
    font-size: 8.500px;
    line-height: 9.500px;
    text-align: center;
    color: #3c3c3c;
}
.rb .big { width: 20px; height: 20px; flex: none; }
.rb .push { margin-top: 4px; }
.rb.on { background: linear-gradient(#c5e0fa, #a5cdf4); border: 1px solid #5a9fe0; padding-top: 2px; }
.gap1 { margin-left: 1px; }
.gap2 { margin-left: 2px; }
.gap3 { margin-left: 3px; }
.w22 { width: 22px; }
.w23 { width: 23px; }
.w24 { width: 24px; }
.w26 { width: 26px; }
.w36 { width: 36px; }
.caret { font-size: 6px; color: #333; line-height: 6px; }
.rbody.off .rb { color: #b5b5b5; }
.rbody.off svg { opacity: .8; }
.rsmallic { display: flex; flex-direction: column; gap: 4px; margin: 9px 0 0 3px; width: 15px; }
.rsmallic svg { width: 12px; height: 12px; }
.rcombos { display: flex; flex-direction: column; gap: 2px; margin-top: 8px; }
.combo {
    width: 107px;
    height: 13px;
    background: #f5f5f5;
    border: 1px solid #e0e0e0;
    position: relative;
}
.combo i { position: absolute; right: 2px; top: 1px; font-size: 6px; color: #555; }
.rrows { display: flex; flex-direction: column; }
.rrow {
    display: flex;
    align-items: center;
    gap: 2px;
    font-size: 8px;
    height: 15px;
    padding-left: 2px;
    white-space: nowrap;
}
.rrow svg { width: 11px; height: 11px; flex: none; }
.rrow.on { background: linear-gradient(#d0e6fb, #b5d6f6); border: 1px solid #5a9fe0; height: 14px; }
.r3 { width: 68px; margin-left: 2px; }
.r4 { margin-left: 2px; padding-top: 7px; gap: 3px; }

/* docked panels */
.workspace {
    height: 431px;
    display: flex;
    padding-top: 2px;
}
.sidestrip {
    width: 14px;
    padding: 3px 0 0 3px;
}
.sidestrip span {
    display: block;
    width: 8px;
    height: 56px;
    background: #e6e6e6;
    writing-mode: vertical-rl;
    font-size: 7px;
    line-height: 8px;
    white-space: nowrap;
    letter-spacing: .1px;
    color: #222;
}
.panel { display: flex; flex-direction: column; }
.ptitle {
    height: 14px;
    flex: none;
    background: linear-gradient(#a9a9a9, #cdcdcd 15%, #8f8f8f);
    border-top: 1px solid #777;
    border-bottom: 1px solid #666;
    font-size: 7.500px;
    line-height: 12px;
    padding-left: 3px;
    position: relative;
    color: #222;
}
.ptitle.focus {
    background: linear-gradient(#c9e0f5, #b7d6f3);
    border-color: #8aa;
}
.pbtns { position: absolute; right: 3px; top: 0; display: flex; gap: 4px; align-items: center; }
.pin { width: 6px; height: 6px; border-right: 1px solid #ddd; border-bottom: 1px solid #ddd; transform: rotate(45deg); }
.x { font-size: 8px; color: #111; font-weight: bold; }

.plan { width: 288px; }
.planview {
    flex: 1;
    background: #000;
    margin: 0 2px 0 1px;
}
.planview svg, .view3d svg { display: block; width: 100%; height: 100%; }
.deck { fill: none; stroke: #e6d2f2; stroke-width: 19.500; }
.deckin { fill: none; stroke: #d48cfb; stroke-width: 18; }
.deckline { fill: none; stroke: #a0a0a0; stroke-width: .8; }
.viewtabs {
    height: 12px;
    flex: none;
    background: #7c7c7c;
    display: flex;
    padding-left: 3px;
    margin-bottom: 1px;
}
.vt { width: 23px; font-size: 7px; line-height: 11px; text-align: center; color: #555; }
.vt.on { background: #d0d0d0; color: #222; }

.view3d {
    width: 512px;
    margin: -1px 2px 1px;
    background: #000;
}

.seltree { width: 418px; }
.treewrap {
    flex: 1;
    background: #f0f0f0;
    padding: 3px 6px 14px 8px;
    display: flex;
    flex-direction: column;
    min-height: 0;
}
.treecombo {
    height: 11px;
    flex: none;
    background: #e4e4e4;
    border: 1px solid #ccc;
    font-size: 7.500px;
    line-height: 9px;
    padding-left: 2px;
    position: relative;
}
.treecombo i { position: absolute; right: 1px; top: 0; font-size: 7px; color: #555; }
.treebox {
    position: relative;
    margin: 4px 2px 0 0;
    flex: 1;
    background: #fff;
    overflow: hidden;
    border-top: 1px solid #aaa;
    border-left: 1px solid #bbb;
}
.treerows { margin-top: -2px; }
.tr {
    height: 9.830px;
    display: flex;
    align-items: center;
    font-weight: bold;
    font-size: 7.300px;
    letter-spacing: .4px;
    color: #222;
    white-space: nowrap;
    position: relative;
}
.l0 { padding-left: 64px; }
.l1 { padding-left: 74px; }
.l2 { padding-left: 83.500px; }
.l3 { padding-left: 93px; }
.l4 { padding-left: 103px; }
.l5 { padding-left: 106px; }
.xb {
    width: 6px;
    height: 6px;
    flex: none;
    border: 1px solid #777;
    background: #fff;
    position: relative;
    margin-right: 1px;
}
.xb::after {
    content: "";
    position: absolute;
    left: 0;
    right: 0;
    top: 1.500px;
    height: 1px;
    background: #555;
}
.xb::before {
    content: "";
    position: absolute;
    left: -6px;
    width: 5px;
    top: 1.500px;
    height: 1px;
    background: #ccc;
}
.xb.plus { background: linear-gradient(#555, #555) center/1px 100% no-repeat #fff; }
.xb.none { border: 0; background: none; width: 11px; }
.xb.none::after { display: none; }
.xb.none::before { left: -2px; width: 11px; }
.sel .xb { border-color: #0b4fa0; background: #2f86dd; }
.sel .xb::after { display: none; }
.ic { width: 8px; height: 8px; margin-right: 2px; flex: none; }
.hl span { background: #1f80dc; color: #fff; }
.g { position: absolute; width: 1px; background: #ccc; }
.g1 { left: 46px; top: 0; height: 384px; }
.g2 { left: 56px; top: 0; height: 111px; }
.g3 { left: 76px; top: 0; height: 82px; }
.g4 { left: 96px; top: 0; height: 24px; }
.g5 { left: 66px; top: 116px; height: 182px; }
.g6 { left: 76px; top: 126px; height: 60px; }
.g7 { left: 76px; top: 302px; height: 82px; }
.g8 { left: 96px; top: 146px; height: 30px; }

.vscroll {
    position: absolute;
    right: 0;
    top: 0;
    bottom: 0;
    width: 9px;
    background: #f0f0f0;
    display: flex;
    flex-direction: column;
    align-items: stretch;
    text-align: center;
    font-size: 6px;
    color: #777;
    font-weight: normal;
    letter-spacing: 0;
}
.vscroll b { height: 10px; font-weight: normal; line-height: 10px; }
.vscroll .end { margin-top: auto; }
.thumb { background: #cdcdcd; }
.tscroll .thumb { margin-top: 73px; height: 105px; }
.qscroll { top: 0; width: 10px; }
.qscroll .thumb { margin-top: 26px; height: 131px; }

.props { width: 334px; margin-left: 4px; }
.propbody {
    flex: 1;
    background: #fff;
    margin: 1px 2px 3px 0;
    padding-bottom: 9px;
    display: flex;
    align-items: center;
    justify-content: center;
    font-size: 7.500px;
    color: #333;
}

/* quantification */
.quant {
    margin-left: 14px;
    width: 1559px;
    height: 329px;
    display: flex;
    flex-direction: column;
    flex: none;
}
.qtitle { height: 16px; line-height: 14px; background: linear-gradient(#808080, #b5b5b5 15%, #8c8c8c); }
.qbody {
    flex: 1;
    min-height: 0;
    background: #f0f0f0;
    padding: 7px 7px 0 6px;
    display: flex;
    flex-direction: column;
}
.toolbar { display: flex; align-items: stretch; flex: none; }
.tb1 { height: 16px; padding-left: 3px; }
.tb2 { height: 19px; margin-top: 2px; }
.bgroup { display: flex; flex: none; }
.m0 { margin-left: 0; }
.m2 { margin-left: 2px; }
.m3 { margin-left: 3px; }
.m9 { margin-left: 9px; }
.m10 { margin-left: 10px; }
.m11 { margin-left: 11px; }
.m20 { margin-left: 20px; }
.tbtn {
    display: flex;
    align-items: center;
    justify-content: center;
    gap: 1px;
    border: 1px solid #a7a7a7;
    border-radius: 2px;
    background: linear-gradient(#fafafa, #e4e4e4);
    font-size: 7.500px;
    white-space: nowrap;
    color: #333;
}
.tbtn svg { width: 12px; height: 12px; flex: none; }
.tbtn i { font-size: 6px; color: #222; margin-left: 1px; }
.tbtn.icon { width: 18px; }
.tbtn.icon.wide { width: 25px; }
.tbtn.on { background: #c9e1f8; border-color: #5a9fe0; }
.tbtn.off { color: #b5b5b5; border-color: #d5d5d5; background: #f2f2f2; }
.dimmed .tbtn { color: #aaa; border-color: #d0d0d0; background: #f4f4f4; }
.b17 { width: 17px; }
.b19 { width: 19px; }
.b20 { width: 20px; }
.b25 { width: 25px; }
.b26 { width: 26px; }
.b35 { width: 35px; }
.b50 { width: 50px; }
.b53 { width: 53px; }
.b56 { width: 56px; }
.b70 { width: 70px; }
.b74 { width: 74px; }
.b75 { width: 75px; }
.b76 { width: 76px; }
.fx {
    font: italic 11px/16px "Liberation Serif", serif;
    margin-left: 12px;
    width: 13px;
    color: #222;
}
.fx sub { font-size: 7px; }
.formula {
    flex: 1;
    background: #fafafa;
    border: 1px solid #b5b5b5;
    margin: 1px 0;
}

.qgrid {
    margin-top: 6px;
    flex: 1;
    min-height: 0;
    display: flex;
    gap: 7px;
    padding-bottom: 6.500px;
}
.qtree {
    position: relative;
    width: 510px;
    background: #fff;
    border-left: 1px solid #bcd0e6;
    border-bottom: 1px solid #bcd0e6;
    display: flex;
    flex-direction: column;
}
.qhead {
    height: 16px;
    flex: none;
    display: flex;
    background: linear-gradient(#fff, #d6e4f3);
    border-top: 1px solid #bcd0e6;
    margin-right: 10px;
    font-size: 8px;
    line-height: 15px;
    text-align: center;
    color: #333;
}
.qh1 { width: 375px; border-right: 1px solid #d8d8d8; }
.qh2 { flex: 1; font-weight: bold; font-size: 7.500px; }
.qlist { position: relative; flex: 1; overflow: hidden; margin-right: 10px; }
.qrows { margin-top: -6.300px; }
.qr { display: flex; height: 13.520px; border-bottom: 1px solid #f5f5f5; }
.qn {
    width: 375px;
    flex: none;
    display: flex;
    align-items: center;
    border-right: 1px solid #ececec;
    font-size: 7.600px;
    color: #444;
    white-space: nowrap;
}
.qw {
    flex: 1;
    font-size: 7.500px;
    line-height: 13px;
    padding-left: 3px;
    color: #444;
}
.d0 { padding-left: 9px; }
.d1 { padding-left: 15.500px; }
.d2 { padding-left: 32px; }
.qn .xb { width: 7px; height: 7px; margin-right: 1px; background: #fff; border-color: #888; }
.qn .xb::before { display: none; }
.qn .xb::after { top: 2px; }
.qi2 { width: 12px; height: 10px; margin-right: 0; margin-left: 1px; flex: none; }
.qi3 { width: 9px; height: 11px; margin-right: 3px; flex: none; }
.qr.picked .qn { background: #9bb5d6; border: 1px solid #2b4a70; color: #fff; }
.qr.picked .qw { background: #0078d7; color: #fff; }
.qg { position: absolute; background: #999; }
.q1 { left: 12px; top: 0; width: 1px; height: 122px; }
.q2 { left: 18px; top: 0; width: 1px; height: 68px; }
.q3 { left: 25px; top: 20px; width: 1px; height: 35px; }
.q4 { left: 25px; top: 75px; width: 1px; height: 35px; }
.q5 { left: 18px; top: 126px; width: 1px; height: 80px; }
.q6 { left: 25px; top: 142px; width: 1px; height: 48px; }
.q7 { left: 25px; top: 210px; width: 1px; height: 35px; }

.qright {
    flex: 1;
    display: flex;
    flex-direction: column;
    gap: 5px;
}
.grid {
    background: #fff;
    border: 1px solid #a5a5a5;
    display: flex;
    flex-direction: column;
    justify-content: space-between;
    border-right-color: #bbb;
}
.upper { height: 102.500px; flex: none; }
.lower { flex: 1; }
.grid table {
    width: 100%;
    table-layout: fixed;
    border-collapse: collapse;
    font-size: 7.500px;
    line-height: 10px;
    color: #333;
}
.c30 { width: 30.500px; }
.c50 { width: 49.500px; }
.c92 { width: 92.200px; }
.c37 { width: 37px; }
.grid th {
    height: 12.300px;
    font-weight: normal;
    background: linear-gradient(#fff, #d4e2f3);
    border-right: 1px solid #dfe7f0;
    color: #555;
    overflow: hidden;
    white-space: nowrap;
}
.lower th { height: 13.300px; }
.grid td {
    height: 12px;
    padding: 0 1px 0 1px;
    border-right: 1px solid #f2f2f2;
    white-space: nowrap;
    overflow: hidden;
    border-bottom: 1px solid #f6f6f6;
    font-weight: bold;
    font-size: 7px;
}
.grid .div { border-right: 2px solid #777; }
.grid td.n { text-align: right; }
.rowsel td { background: #6299e2; color: #f4f8ff; border-right-color: #80aee8; border-bottom: 0; }
.grid a { color: #2a6ad0; text-decoration: underline; font-weight: normal; padding-left: 2px; }
.rowsel a { color: #1c4f9c; }
.hscroll {
    height: 11px;
    flex: none;
    background: #efefef;
    display: flex;
    font-size: 8px;
    color: #888;
}
.hscroll b { width: 11px; font-weight: normal; text-align: center; line-height: 10px; }
.hscroll .end { margin-left: auto; }
.hthumb { background: #cbcbcb; }
.h1 .hthumb { margin-left: 160px; width: 755px; }
.h2 .hthumb { width: 478px; }

.doctabs {
    height: 10px;
    padding-left: 15px;
    display: flex;
    gap: 3px;
    background: linear-gradient(#8a8a8a, #9a9a9a);
    flex: none;
}
.dt { font-size: 7.500px; line-height: 10px; padding: 0 3px; color: #6a6a6a; border-right: 1px solid #bbb; }
.dt.on { background: #b5cce6; color: #222; letter-spacing: .4px; }
.dockbar {
    height: 14px;
    padding: 3px 0 1px 15px;
    display: flex;
    flex: none;
    gap: 1px;
    background: linear-gradient(#888, #9d9d9d);
}
.db {
    background: #d8d8d8;
    border: 1px solid #aaa;
    font-size: 7.500px;
    line-height: 8px;
    padding: 0 2px;
    color: #222;
    letter-spacing: .2px;
}
.db.first { margin-right: 6px; width: 21px; text-align: center; }
.statusbar {
    flex: 1;
    display: flex;
    align-items: center;
    background: #a2a2a2;
    border-bottom: 1px solid #222;
    padding-left: 6px;
    font-size: 7.500px;
    color: #222;
}
.autosave { width: 1408px; flex: none; white-space: nowrap; letter-spacing: .05px; }
.sheet { width: 43px; flex: none; font-size: 8px; }
.sheetic { width: 11px; height: 11px; margin-right: 14px; flex: none; }
.meter {
    position: relative;
    width: 19px;
    height: 5px;
    margin: 6px 3px 0 0;
    background: #ddd;
    border: 1px solid #444;
    flex: none;
}
.meter::before {
    content: "";
    position: absolute;
    left: 1px;
    top: -6px;
    width: 9px;
    height: 3px;
    background: #333;
}
.meter i { display: block; height: 100%; background: #0000dd; }
.m100 { width: 100%; }
.m30 { width: 30%; }
.mem { font-size: 6.500px; color: #444; margin-left: 2px; white-space: nowrap; }

/* context menu */
.ctxmenu {
    position: absolute;
    left: 956px;
    top: 303px;
    width: 136px;
    height: 281px;
    background: #f0f0f0;
    border: 1px solid #a0a0a0;
    box-shadow: 1px 1px 1px #888;
    z-index: 4;
}
.submenu {
    left: 1093px;
    top: 406px;
    width: 148px;
    height: 43px;
}
.mi {
    height: 13.500px;
    line-height: 13px;
    padding-left: 21px;
    font-size: 8.200px;
    color: #444;
    white-space: nowrap;
    position: relative;
}
.submenu .mi { padding-left: 20px; }
.mi.head { font-weight: bold; color: #333; font-size: 8px; }
.mi kbd {
    position: absolute;
    left: 94px;
    font: inherit;
}
.mi.hot { background: #0078d7; color: #d4e6f8; margin: 0 1px; }
.mi.check::before {
    content: "✓";
    position: absolute;
    left: 5px;
    color: #222;
    font-size: 8px;
}
.mi.sub::after {
    content: "";
    position: absolute;
    right: 6px;
    top: 4.500px;
    border: 2.500px solid transparent;
    border-left: 3px solid #222;
    border-right: 0;
}
.mi.hot.sub::after { border-left-color: #fff; }
.msep {
    height: 3.900px;
    padding-top: 1.400px;
    margin: 0 2px;
}
.msep::after { content: ""; display: block; height: 1px; background: #bcbcbc; }

/* annotations drawn on top of the capture */
.marks {
    position: absolute;
    left: 0;
    top: 0;
    width: 1575px;
    height: 886px;
    pointer-events: none;
    z-index: 5;
}
.dash-red { fill: none; stroke: #f00; stroke-width: 3.500; stroke-dasharray: 12 4; }
.dash-blue { fill: none; stroke: #00c; stroke-width: 3.500; stroke-dasharray: 12 4; }
.curve { fill: none; stroke: #f00; stroke-width: 3.500; stroke-linecap: round; }
.head { fill: #f00; }
.helpq { font: bold 15px "Liberation Sans", sans-serif; fill: #fff; }
```
